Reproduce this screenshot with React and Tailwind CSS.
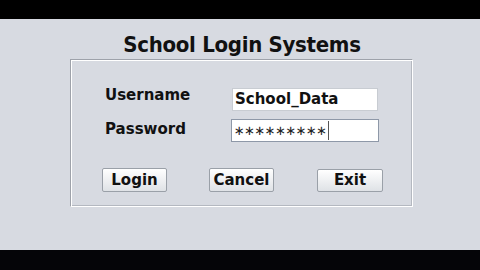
export default function App() {
  const font = { fontFamily: '"DejaVu Sans", "Liberation Sans", sans-serif' };
  const stars = Array.from({ length: 9 });
  return (
    <div className="w-[480px] h-[270px] flex flex-col bg-black overflow-hidden" style={font}>
      <div className="h-[19px] bg-black" />
      <div className="h-[231px] bg-[#d7dae1] flex flex-col">
        <div className="h-[40px] flex items-end justify-center pl-[4px]">
          <h1 className="text-[22px] leading-none font-bold font-stretch-condensed text-[#111] tracking-[-0.3px] pb-[3px]">School Login Systems</h1>
        </div>
        <div className="ml-[70px] w-[343px] h-[148px] border border-t-[#9ea2aa] border-l-[#9ea2aa] border-r-white border-b-white shadow-[inset_1px_1px_0_#ffffff,inset_-1px_-1px_0_#b4b8c0] flex flex-col">
          <div className="flex pt-[28px]">
            <div className="w-[161px] pl-[34px] flex flex-col text-[15px] font-bold text-[#111] leading-none">
              <span className="h-[21px] flex items-center -mt-[3px]">Username</span>
              <span className="h-[21px] flex items-center mt-[13px]">Password</span>
            </div>
            <div className="flex flex-col gap-[8px]">
              <div className="w-[146px] h-[23px] bg-white border border-[#c8ccd2] flex items-center pl-[2px] text-[15px] font-bold text-[#111] leading-none">School_Data</div>
              <div className="w-[148px] h-[23px] bg-white border border-[#8e98a8] flex items-center pl-[2px] text-[#222] leading-none -ml-[1px]">
                {stars.map((_, i) => (
                  <span key={i} className="w-[10.3px] flex justify-center text-[13px] leading-none">∗</span>
                ))}
                <span className="w-px h-[19px] bg-[#555] ml-[1px]" />
              </div>
            </div>
          </div>
          <div className="flex pt-[26px] pl-[31px]">
            <button className="w-[65px] h-[24px] rounded-[2px] border border-[#9aa0a8] bg-gradient-to-b from-white to-[#dfe2e6] text-[15px] font-bold text-[#111] leading-none">Login</button>
            <button className="ml-[42px] w-[65px] h-[24px] rounded-[2px] border border-[#9aa0a8] bg-gradient-to-b from-white to-[#dfe2e6] text-[15px] font-bold text-[#111] leading-none">Cancel</button>
            <button className="ml-[43px] mt-[1px] w-[66px] h-[23px] rounded-[2px] border border-[#9aa0a8] bg-gradient-to-b from-white to-[#dfe2e6] text-[15px] font-bold text-[#111] leading-none">Exit</button>
          </div>
        </div>
      </div>
      <div className="h-[20px] bg-[#050508]" />
    </div>
  );
}
